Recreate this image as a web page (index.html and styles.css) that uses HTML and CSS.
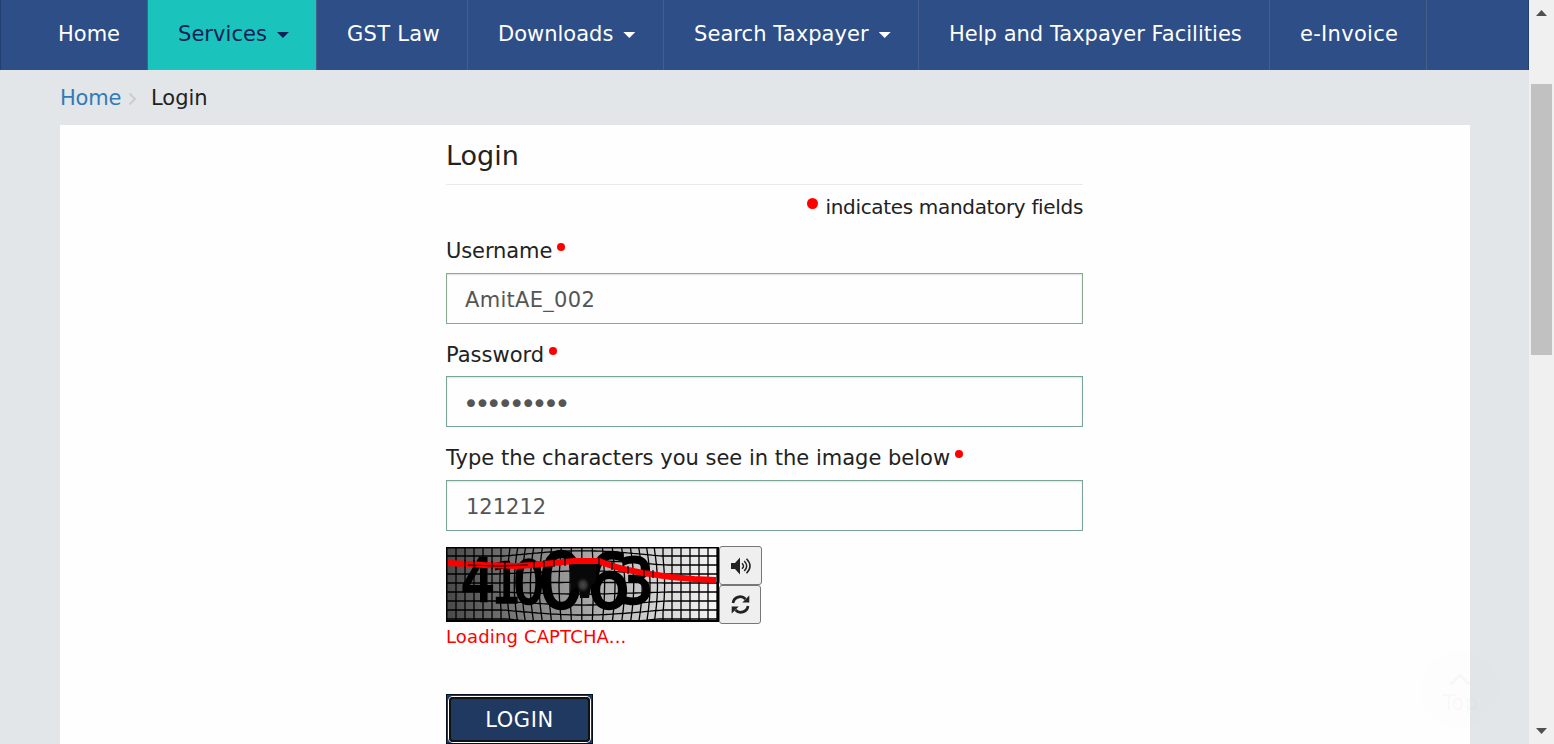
FILE: index.html
```html
<!DOCTYPE html>
<html lang="en">
<head>
<meta charset="utf-8">
<title>Login</title>
<link rel="stylesheet" href="styles.css">
</head>
<body>
<div class="viewport">
  <div class="page">
    <nav class="nav">
      <a class="nav-item home">Home</a>
      <a class="nav-item services">Services<i class="caret"></i></a>
      <a class="nav-item law">GST Law</a>
      <a class="nav-item downloads">Downloads<i class="caret"></i></a>
      <a class="nav-item search">Search Taxpayer<i class="caret"></i></a>
      <a class="nav-item help">Help and Taxpayer Facilities</a>
      <a class="nav-item invoice">e-Invoice</a>
    </nav>
    <div class="crumbs">
      <a class="crumb-link">Home</a>
      <svg class="crumb-arrow" width="9" height="14" viewBox="0 0 9 14"><path d="M1.500 1.500 7 7l-5.500 5.500" fill="none" stroke="#ccc" stroke-width="2"/></svg>
      <span class="crumb-current">Login</span>
    </div>
    <main class="panel">
      <form class="form">
        <h1 class="title"><span>Login</span></h1>
        <p class="note"><i class="dot dot-large"></i><span>indicates mandatory fields</span></p>
        <label class="label label-user"><span>Username</span><i class="dot"></i></label>
        <input class="input input-user" type="text" value="AmitAE_002">
        <label class="label label-pass"><span>Password</span><i class="dot"></i></label>
        <input class="input input-pass" type="password" value="password1">
        <label class="label label-chars"><span>Type the characters you see in the image below</span><i class="dot"></i></label>
        <input class="input input-chars" type="text" value="121212">
        <div class="captcha">
          <svg class="captcha-image" width="273" height="75" viewBox="0 0 273 75">
            <defs>
              <linearGradient id="shade"><stop offset="0" stop-color="#484848"/><stop offset=".25" stop-color="#777"/><stop offset=".5" stop-color="#a2a2a2"/><stop offset=".75" stop-color="#d0d0d0"/><stop offset="1" stop-color="#f8f8f8"/></linearGradient>
              <radialGradient id="eye"><stop offset="0" stop-color="#484848"/><stop offset=".5" stop-color="#333"/><stop offset="1" stop-color="#111" stop-opacity="0"/></radialGradient>
            </defs>
            <rect width="273" height="75" fill="url(#shade)"/>
            <g id="grid" fill="none" stroke="#000" stroke-width="1.300"></g>
            <g class="digits">
              <text transform="translate(15 54) scale(.92 1)" font-size="58">4</text>
              <text transform="translate(45 55) scale(.84 1)" font-size="56">1</text>
              <text transform="translate(67 56) scale(.84 1)" font-size="59">0</text>
              <text transform="translate(92 61) scale(.96 1)" font-size="76">0</text>
              <text transform="translate(140 61) scale(.93 1)" font-size="75">6</text>
              <text transform="translate(172 56) scale(.9 1)" font-size="62">3</text>
            </g>
            <path d="M123 18q14-8 27 0v17l-5 4-2 12h-9l-1-14-8 8Z" fill="#080808"/>
            <ellipse cx="137" cy="38" rx="7" ry="8" fill="url(#eye)"/>
            <path d="M1 16 22 17 38 18 70 19 87 18 108 16 128 14 153 14 163 18 177 22 197 26 225 30 248 32 270 33" fill="none" stroke="#f00" stroke-width="6"/>
            <g id="cuts" fill="none" stroke="#000" stroke-width="1.200"></g>
            <path d="M0 .5h273M.5 0v75M272 0v75M0 74h273" fill="none" stroke="#000" stroke-width="2"/>
          </svg>
          <div class="captcha-tools">
            <button class="tool tool-sound" type="button" aria-label="Play audio">
              <svg width="20" height="18" viewBox="0 0 20 18"><path d="M0 6h4l5-5.500v17L4 12H0Z" fill="#222"/><path d="M11 6.200q3 2.800 0 5.600M13.200 4q5 5 0 10M15.500 1.700q7 7.300 0 14.600" fill="none" stroke="#222" stroke-width="1.500"/></svg>
            </button>
            <button class="tool tool-refresh" type="button" aria-label="Refresh">
              <svg width="19" height="19" viewBox="0 0 19 19"><path d="M2 8A7.300 7.300 0 0 1 14.500 4M17 11A7.300 7.300 0 0 1 4.500 15" fill="none" stroke="#222" stroke-width="2.700"/><path d="M18.300.5v7h-7ZM.7 18.500v-7h7Z" fill="#222"/></svg>
            </button>
          </div>
        </div>
        <p class="loading">Loading CAPTCHA...</p>
        <button class="submit" type="button"><span>LOGIN</span></button>
      </form>
    </main>
    <div class="to-top"><svg width="22" height="13" viewBox="0 0 22 13"><path d="m1.500 11.500 9.500-9 9.500 9" fill="none" stroke="currentColor" stroke-width="3"/></svg><span>Top</span></div>
  </div>
  <div class="scrollbar"><i class="arrow-up"></i><i class="thumb"></i><i class="arrow-down"></i></div>
</div>
<script src="captcha.js"></script>
</body>
</html>
```
FILE: styles.css
```css
* { box-sizing: border-box; }
body { margin: 0; overflow: hidden; font: 21px/26px "DejaVu Sans", Verdana, sans-serif; color: #222; }
p, h1 { margin: 0; font-weight: 400; }
.viewport { display: flex; width: 1554px; height: 744px; overflow: hidden; }
.page { position: relative; width: 1529px; background: #e2e6e9; }
.nav { display: flex; height: 70px; background: #2d4e87; border-left: 1px solid #223f70; border-right: 1px solid #223f70; }
.nav-item { display: flex; align-items: center; height: 70px; padding: 0 0 3px 30px; color: #fff; border-right: 1px solid #455f88; white-space: nowrap; }
.home { width: 147px; padding-left: 57px; }
.services { width: 169px; background: #1ac4bd; color: #0d2057; letter-spacing: .05px; }
.law { width: 151px; letter-spacing: .3px; }
.downloads { width: 196px; }
.search { width: 255px; letter-spacing: .07px; }
.help { width: 351px; letter-spacing: .02px; }
.invoice { width: 157px; letter-spacing: .3px; }
.caret { width: 12px; height: 6px; margin: 3px 0 0 10px; background: currentColor; clip-path: polygon(0 0, 100% 0, 50% 100%); }
.crumbs { display: flex; align-items: center; height: 55px; padding-left: 60px; }
.crumb-link { width: 67px; color: #337ab7; letter-spacing: -.2px; }
.crumb-arrow { margin: 2px 14px 0 1px; }
.panel { width: 1410px; height: 619px; margin-left: 60px; background: #fefefe; }
.form { display: flex; flex-direction: column; align-items: flex-start; width: 637px; margin-left: 386px; }
.title { width: 637px; height: 60px; padding-top: 13px; font-size: 27px; line-height: 36px; border-bottom: 1px solid #e9e9e9; }
.note { display: flex; align-items: center; justify-content: flex-end; width: 637px; height: 45px; padding-bottom: 2px; font-size: 20px; letter-spacing: -.33px; white-space: nowrap; }
.label { display: flex; align-items: center; white-space: nowrap; }
.label-user { height: 43px; padding-bottom: 2px; letter-spacing: -.1px; }
.label-pass { height: 52px; padding-top: 10px; }
.label-chars { height: 53px; padding-top: 9px; }
.dot { width: 8px; height: 8px; margin: -8px 0 0 5px; border-radius: 50%; background: #f00; }
.dot-large { width: 11px; height: 11px; margin: -7px 7px 0 0; }
.input { width: 637px; height: 51px; padding: 2px 19px 0; border: 1px solid #7aa596; border-radius: 0; outline: 0; background: #fefefe; box-shadow: inset 0 1px 2px rgba(0, 0, 0, .12); font: 21px "DejaVu Sans", Verdana, sans-serif; color: #555; }
.input-user { padding-left: 18px; border-color: #8ba98e; letter-spacing: .3px; }
.input-pass { padding: 3px 16px 0; font-size: 27px; letter-spacing: -4.500px; }
.captcha { display: flex; height: 79px; margin-top: 15px; }
.captcha-image { display: block; margin-top: 1px; }
.digits { font-family: "DejaVu Sans", sans-serif; fill: #000; stroke: #000; stroke-width: 2.500px; }
.captcha-tools { display: flex; flex-direction: column; }
.tool { display: flex; align-items: center; justify-content: center; height: 39px; padding: 0; border: 1px solid #777; border-radius: 3px; background: #efefef; }
.tool-sound { width: 43px; }
.tool-refresh { width: 42px; }
.loading { height: 69px; font-size: 18px; line-height: 24px; letter-spacing: .15px; color: #f00; white-space: nowrap; }
.submit { width: 147px; height: 50px; padding: 2px; border: 1px solid #061020; background: #1f3960; }
.submit span { display: flex; align-items: center; justify-content: center; height: 45px; padding-top: 1px; border: 2px solid #111; border-radius: 4px; box-shadow: 0 0 0 1px #fff; color: #fff; font: 21px "DejaVu Sans", Verdana, sans-serif; letter-spacing: .6px; }
.to-top { position: absolute; left: 1421px; top: 651px; display: flex; flex-direction: column; align-items: center; width: 78px; height: 78px; padding-top: 22px; border-radius: 50%; background: rgba(120, 120, 120, .008); color: rgba(120, 120, 120, .045); line-height: 34px; }
.scrollbar { display: flex; flex-direction: column; align-items: center; width: 25px; height: 744px; padding: 10px 0; background: #f0f0f0; }
.arrow-up { width: 11px; height: 6px; background: #505050; clip-path: polygon(50% 0, 100% 100%, 0 100%); }
.thumb { width: 21px; height: 271px; margin-top: 68px; background: #c1c1c1; }
.arrow-down { width: 11px; height: 6px; margin-top: 373px; background: #505050; clip-path: polygon(0 0, 100% 0, 50% 100%); }
```
FILE: captcha.js
```js
// Draws a square mesh that bulges around the centre of the captcha.
const cx = 137, cy = 38;
function warp(x, y) {
  const dx = x - cx, dy = y - cy;
  const r = Math.hypot(dx, dy * 1.3);
  const k = r < 88 ? 1 + 0.35 * Math.pow(1 - r / 88, 1.2) : 1;
  return (cx + dx * k).toFixed(1) + " " + (cy + dy * k).toFixed(1);
}
function line(points) {
  const p = document.createElementNS("http://www.w3.org/2000/svg", "path");
  p.setAttribute("d", "M" + points.join("L"));
  return p;
}
const grid = document.getElementById("grid");
for (let x = 10; x < 273; x += 9) {
  const pts = [];
  for (let y = 0; y <= 75; y += 3) pts.push(warp(x, y));
  grid.append(line(pts));
}
for (let y = 9; y < 75; y += 9) {
  const pts = [];
  for (let x = 0; x <= 273; x += 3) pts.push(warp(x, y));
  grid.append(line(pts));
}
const cuts = document.getElementById("cuts");
for (const [x, y] of [[19, 17], [28, 17], [46, 18], [59, 19], [88, 18], [98, 17], [108, 16], [119, 15], [153, 14], [166, 19], [182, 23], [198, 26], [207, 27]]) {
  cuts.append(line([x + " " + (y - 4), x + " " + (y + 4)]));
}
cuts.append(line(["22 18", "52 19", "82 18"]));
```
